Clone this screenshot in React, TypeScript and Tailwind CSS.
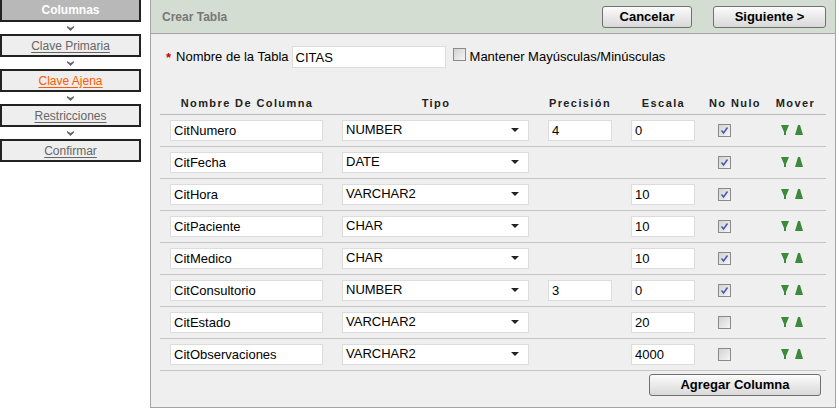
const steps = [
  { label: "Clave Primaria", color: "text-[#666]" },
  { label: "Clave Ajena", color: "text-[#ff5a00]" },
  { label: "Restricciones", color: "text-[#666]" },
  { label: "Confirmar", color: "text-[#666]" },
];

const rows = [
  { name: "CitNumero", type: "NUMBER", prec: "4", scale: "0", notNull: true },
  { name: "CitFecha", type: "DATE", prec: null, scale: null, notNull: true },
  { name: "CitHora", type: "VARCHAR2", prec: null, scale: "10", notNull: true },
  { name: "CitPaciente", type: "CHAR", prec: null, scale: "10", notNull: true },
  { name: "CitMedico", type: "CHAR", prec: null, scale: "10", notNull: true },
  { name: "CitConsultorio", type: "NUMBER", prec: "3", scale: "0", notNull: true },
  { name: "CitEstado", type: "VARCHAR2", prec: null, scale: "20", notNull: false },
  { name: "CitObservaciones", type: "VARCHAR2", prec: null, scale: "4000", notNull: false },
];

function Chevron() {
  return (
    <div className="flex h-[12px] items-center justify-center">
      <svg width="7" height="5" viewBox="0 0 7 5">
        <polygon points="0,0 3.5,2 7,0 7,1.5 3.5,5 0,1.5" fill="#666" />
      </svg>
    </div>
  );
}

function Check({ checked }: { checked: boolean }) {
  return (
    <span className="inline-flex h-[13px] w-[13px] items-center justify-center border border-[#8a8a8a] bg-linear-to-br from-[#d2d2d2] to-[#f5f5f5]">
      {checked && (
        <svg width="9" height="9" viewBox="0 0 9 9">
          <path d="M1.5 4.5 L3.5 7 L7.5 1.5" stroke="#4558b0" strokeWidth="1.5" fill="none" />
        </svg>
      )}
    </span>
  );
}

function Field({ value, className }: { value: string; className: string }) {
  return (
    <input
      readOnly
      value={value}
      className={`h-[21px] border border-[#dcdcdc] bg-white pl-[3px] text-[13px] text-black outline-none ${className}`}
    />
  );
}

function Btn({ label, className }: { label: string; className: string }) {
  return (
    <button className={`h-[22px] rounded-[3px] border border-[#707070] bg-linear-to-b from-[#fbfbfb] to-[#d9d9d9] text-[13px] font-bold text-black ${className}`}>
      {label}
    </button>
  );
}

function Arrows() {
  return (
    <div className="flex items-center gap-[6px]">
      <svg width="8" height="10" viewBox="0 0 8 10">
        <polygon points="0,0 8,0 5,7 5,10 3,10 3,7" fill="#3b8a3b" />
      </svg>
      <svg width="8" height="10" viewBox="0 0 8 10">
        <polygon points="3,0 5,0 8,10 0,10" fill="#3b8a3b" />
      </svg>
    </div>
  );
}

export default function App() {
  return (
    <div className="flex min-h-[411px] w-[839px] gap-[9px] bg-white font-['Liberation_Sans',Arial,sans-serif] text-black">
      {/* wizard steps */}
      <div className="w-[141px] shrink-0">
        <div className="flex h-[22px] items-center justify-center border-x-2 border-b-2 border-[#222] bg-[#b8b8b8] text-[12px] font-bold text-white">
          Columnas
        </div>
        {steps.map((s) => (
          <div key={s.label}>
            <Chevron />
            <div className="flex h-[23px] items-center justify-center border-2 border-[#222] bg-[#eeeeee] text-[12px]">
              <a className={`underline underline-offset-2 ${s.color}`}>{s.label}</a>
            </div>
          </div>
        ))}
      </div>

      {/* main panel */}
      <div className="h-[408px] w-[686px] shrink-0 border-x border-b border-[#a3a3a3] bg-[#efefef]">
        <div className="flex h-[34px] items-center border-b border-[#a3a3a3] bg-[#d3ddd2] pl-[11px] pr-[9px]">
          <span className="text-[12px] font-bold text-[#777]">Crear Tabla</span>
          <Btn label="Cancelar" className="ml-auto w-[90px]" />
          <Btn label="Siguiente >" className="ml-[21px] w-[113px]" />
        </div>

        <div className="mt-[12px] flex h-[22px] items-center pl-[15px] text-[13px]">
          <span className="mr-[5px] text-[13px] font-bold leading-none text-[#cc0000]">*</span>
          <span>Nombre de la Tabla</span>
          <input
            readOnly
            value="CITAS"
            className="ml-[3px] h-[22px] w-[154px] border border-[#dcdcdc] bg-white pl-[3px] text-[13px] outline-none"
          />
          <span className="ml-[7px] mr-[4px]">
            <Check checked={false} />
          </span>
          <span>Mantener Mayúsculas/Minúsculas</span>
        </div>

        <div className="mx-[9px] mt-[24px]">
          <div className="flex h-[23px] items-center border-b border-[#b8b8b8] text-[11px] font-bold tracking-[1.4px] text-[#222]">
            <div className="w-[174px] text-center">Nombre De Columna</div>
            <div className="w-[204px] text-center">Tipo</div>
            <div className="w-[84px] text-center">Precisión</div>
            <div className="w-[83px] text-center">Escala</div>
            <div className="w-[60px] text-center">No Nulo</div>
            <div className="w-[61px] text-center">Mover</div>
          </div>

          {rows.map((r) => (
            <div key={r.name} className="flex h-[32px] items-center border-b border-[#c6c6c6] pb-[1px] text-[13px]">
              <div className="w-[174px] pl-[10px]">
                <Field value={r.name} className="w-[153px]" />
              </div>
              <div className="w-[204px] pl-[8px]">
                <div className="flex h-[21px] w-[187px] items-center justify-between border border-[#dcdcdc] bg-white pl-[3px] pr-[9px]">
                  <span>{r.type}</span>
                  <svg width="8" height="4" viewBox="0 0 8 4">
                    <polygon points="0,0 8,0 4,4" fill="#222" />
                  </svg>
                </div>
              </div>
              <div className="w-[84px] pl-[10px]">
                {r.prec !== null && <Field value={r.prec} className="w-[64px]" />}
              </div>
              <div className="w-[83px] pl-[9px]">
                {r.scale !== null && <Field value={r.scale} className="w-[64px]" />}
              </div>
              <div className="flex w-[55px] pl-[13px]">
                <Check checked={r.notNull} />
              </div>
              <div className="flex w-[66px] pl-[21px]">
                <Arrows />
              </div>
            </div>
          ))}

          <div className="mt-[3px] flex justify-end pr-[5px]">
            <Btn label="Agregar Columna" className="w-[172px]" />
          </div>
        </div>
      </div>
    </div>
  );
}
